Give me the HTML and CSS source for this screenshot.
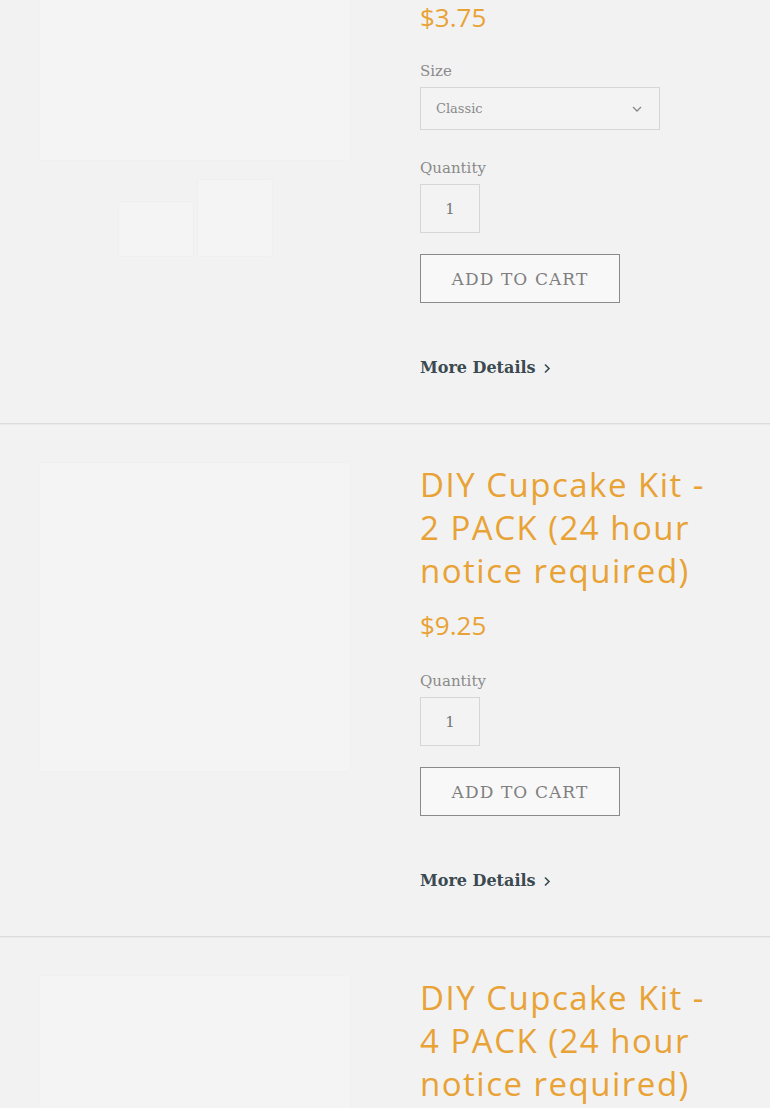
FILE: index.html
```html
<!DOCTYPE html>
<html lang="en">
<head>
<meta charset="utf-8">
<title>Products</title>
<link rel="stylesheet" href="styles.css">
</head>
<body>
<main class="list">
  <section class="product product-first">
    <div class="media">
      <div class="photo photo-cut"></div>
      <div class="thumbs">
        <div class="thumb thumb-short"></div>
        <div class="thumb thumb-tall"></div>
      </div>
    </div>
    <div class="info">
      <p class="price price-first">$3.75</p>
      <div class="field field-first">
        <span class="label">Size</span>
        <div class="select">
          <span>Classic</span>
          <svg class="chev-down" width="10" height="6" viewBox="0 0 10 6"><path d="M1 1l4 4 4-4" fill="none" stroke="#888" stroke-width="1.3"/></svg>
        </div>
      </div>
      <div class="field">
        <span class="label">Quantity</span>
        <div class="qty">1</div>
      </div>
      <button class="cart">ADD TO CART</button>
      <a class="more" href="#">More Details <svg width="8" height="11" viewBox="0 0 8 11"><path d="M2 1.5l4 4-4 4" fill="none" stroke="#3b4a50" stroke-width="1.6"/></svg></a>
    </div>
  </section>

  <section class="product">
    <div class="media">
      <div class="photo"></div>
    </div>
    <div class="info">
      <h2 class="title">DIY Cupcake Kit - 2 PACK (24 hour notice required)</h2>
      <p class="price">$9.25</p>
      <div class="field field-qty">
        <span class="label">Quantity</span>
        <div class="qty">1</div>
      </div>
      <button class="cart">ADD TO CART</button>
      <a class="more" href="#">More Details <svg width="8" height="11" viewBox="0 0 8 11"><path d="M2 1.5l4 4-4 4" fill="none" stroke="#3b4a50" stroke-width="1.6"/></svg></a>
    </div>
  </section>

  <section class="product">
    <div class="media">
      <div class="photo"></div>
    </div>
    <div class="info">
      <h2 class="title">DIY Cupcake Kit - 4 PACK (24 hour notice required)</h2>
      <p class="price">$16.50</p>
    </div>
  </section>
</main>
</body>
</html>
```

FILE: styles.css
```css
* { box-sizing: border-box; }
html, body {
  margin: 0;
  padding: 0;
  background: #f2f2f2;
}
body {
  width: 770px;
  height: 1108px;
  overflow: hidden;
  font-family: "DejaVu Serif", serif;
}
.list {
  display: flex;
  flex-direction: column;
}
.product {
  display: flex;
  gap: 70px;
  padding: 39px 40px 43px 40px;
  border-bottom: 1px solid #dcdcdc;
  box-shadow: 0 1px 1px rgba(0,0,0,0.03);
}
.product-first {
  padding-top: 0;
}
.media {
  width: 310px;
  flex: none;
  display: flex;
  flex-direction: column;
  align-items: center;
}
.photo {
  width: 310px;
  height: 308px;
  background: #f4f4f4;
  box-shadow: 0 0 2px rgba(0,0,0,0.03);
}
.photo-cut {
  height: 160px;
}
.thumbs {
  display: flex;
  align-items: flex-end;
  gap: 5px;
  margin-top: 20px;
}
.thumb {
  width: 74px;
  background: #f4f4f4;
  box-shadow: 0 0 2px rgba(0,0,0,0.04);
}
.thumb-short { height: 54px; }
.thumb-tall { height: 76px; }
.info {
  width: 300px;
  display: flex;
  flex-direction: column;
  align-items: flex-start;
}
.title {
  margin: 0;
  font-family: "Open Sans", sans-serif;
  font-weight: 400;
  font-size: 33px;
  letter-spacing: 1.5px;
  line-height: 43px;
  color: #e8a235;
}
.price {
  margin: 17px 0 0;
  font-family: "Open Sans", sans-serif;
  font-size: 26px;
  line-height: 32px;
  color: #e8a235;
}
.price-first {
  margin-top: 1px;
}
.field {
  display: flex;
  flex-direction: column;
  gap: 6px;
  margin-top: 28px;
}
.field-first {
  margin-top: 28px;
}
.field-qty {
  margin-top: 30px;
}
.label {
  font-size: 15px;
  line-height: 20px;
  color: #8a8a8a;
}
.select {
  width: 240px;
  height: 43px;
  border: 1px solid #d6d6d6;
  background: #f3f3f3;
  display: flex;
  align-items: center;
  justify-content: space-between;
  padding: 0 17px 0 15px;
  font-size: 13px;
  color: #8a8a8a;
}
.qty {
  width: 60px;
  height: 49px;
  border: 1px solid #d6d6d6;
  background: #f3f3f3;
  display: flex;
  align-items: center;
  justify-content: center;
  font-size: 15px;
  color: #777;
}
.cart {
  margin-top: 21px;
  width: 200px;
  height: 49px;
  border: 1px solid #8a8a8a;
  background: #f8f8f8;
  font-family: "DejaVu Serif", serif;
  font-size: 17px;
  letter-spacing: 1.1px;
  color: #7f7f7f;
  padding: 0;
}
.more {
  margin-top: 53px;
  display: flex;
  align-items: center;
  gap: 7px;
  font-size: 16px;
  line-height: 24px;
  font-weight: bold;
  color: #3b4a50;
  text-decoration: none;
}
```
